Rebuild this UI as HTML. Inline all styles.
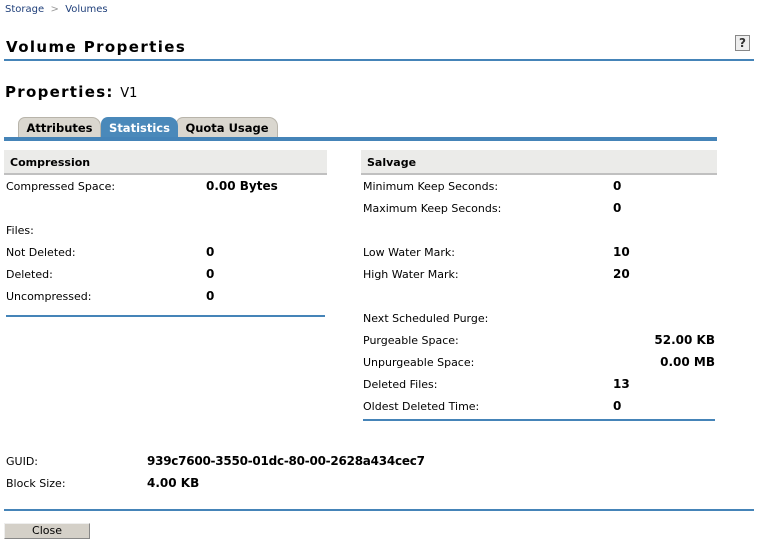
<!DOCTYPE html>
<html><head><style>
body{margin:0;width:758px;height:542px;background:#fff;font-family:"DejaVu Sans","Liberation Sans",sans-serif;font-size:11px;color:#000;position:relative;overflow:hidden}
.a{position:absolute;white-space:nowrap;margin-top:1px}
.b{font-weight:bold;font-size:12px}
.line{position:absolute;background:#4584b8}
.hdr{position:absolute;background:#ebebe9;border-bottom:2px solid #c0c0c0;font-weight:bold;font-size:11px;box-sizing:border-box;padding:6px 0 0 6px;height:25px}
.tab{position:absolute;top:117px;height:20px;background:#dad7cf;border-radius:7px 9px 0 0;font-weight:bold;font-size:11.5px;text-align:center;line-height:21px;border:1px solid #b8b4aa;border-bottom:none;box-sizing:border-box}
</style></head><body>
<div class="a" style="left:5px;top:3px;font-size:10px;color:#1f3f7a">Storage &nbsp;<span style="color:#999">&gt;</span>&nbsp; Volumes</div>
<div class="a" style="left:6px;top:37px;font-size:15px;font-weight:bold;letter-spacing:1.4px">Volume Properties</div>
<div class="a" style="left:735px;top:34px;width:13px;height:14px;border:1px solid #888;background:#eee;font-size:12px;font-weight:bold;text-align:center;line-height:14px;color:#333">?</div>
<div class="line" style="left:4px;top:59px;width:750px;height:2px"></div>
<div class="a" style="left:5px;top:82px;font-size:15px;font-weight:bold;letter-spacing:1.3px">Properties: <span style="font-weight:normal;font-size:13px;letter-spacing:0">V1</span></div>
<div class="tab" style="left:18px;width:83px">Attributes</div>
<div class="tab" style="left:176px;width:102px">Quota Usage</div>
<div class="tab" style="left:101px;width:77px;background:#4a89ba;color:#fff;border-color:#4a89ba">Statistics</div>
<div class="line" style="left:4px;top:137px;width:713px;height:4px"></div>
<div class="hdr" style="left:4px;top:150px;width:323px">Compression</div>
<div class="hdr" style="left:361px;top:150px;width:356px">Salvage</div>

<div class="a" style="left:6px;top:179px">Compressed Space:</div><div class="a b" style="left:206px;top:178px">0.00 Bytes</div>
<div class="a" style="left:6px;top:223px">Files:</div>
<div class="a" style="left:6px;top:245px">Not Deleted:</div><div class="a b" style="left:206px;top:244px">0</div>
<div class="a" style="left:6px;top:267px">Deleted:</div><div class="a b" style="left:206px;top:266px">0</div>
<div class="a" style="left:6px;top:289px">Uncompressed:</div><div class="a b" style="left:206px;top:288px">0</div>
<div class="line" style="left:6px;top:315px;width:319px;height:2px"></div>

<div class="a" style="left:363px;top:179px">Minimum Keep Seconds:</div><div class="a b" style="left:613px;top:178px">0</div>
<div class="a" style="left:363px;top:201px">Maximum Keep Seconds:</div><div class="a b" style="left:613px;top:200px">0</div>
<div class="a" style="left:363px;top:245px">Low Water Mark:</div><div class="a b" style="left:613px;top:244px">10</div>
<div class="a" style="left:363px;top:267px">High Water Mark:</div><div class="a b" style="left:613px;top:266px">20</div>
<div class="a" style="left:363px;top:311px">Next Scheduled Purge:</div>
<div class="a" style="left:363px;top:333px">Purgeable Space:</div><div class="a b" style="right:43px;top:332px">52.00 KB</div>
<div class="a" style="left:363px;top:355px">Unpurgeable Space:</div><div class="a b" style="right:43px;top:354px">0.00 MB</div>
<div class="a" style="left:363px;top:377px">Deleted Files:</div><div class="a b" style="left:613px;top:376px">13</div>
<div class="a" style="left:363px;top:399px">Oldest Deleted Time:</div><div class="a b" style="left:613px;top:398px">0</div>
<div class="line" style="left:363px;top:419px;width:352px;height:2px"></div>

<div class="a" style="left:6px;top:454px">GUID:</div><div class="a b" style="left:147px;top:453px;letter-spacing:-0.25px">939c7600-3550-01dc-80-00-2628a434cec7</div>
<div class="a" style="left:6px;top:476px">Block Size:</div><div class="a b" style="left:147px;top:475px">4.00 KB</div>
<div class="line" style="left:4px;top:509px;width:750px;height:2px"></div>
<div class="a" style="left:4px;top:522px;width:84px;height:14px;background:#d4d0c8;border:1px solid #888;border-top-color:#eee;border-left-color:#eee;text-align:center;line-height:14px">Close</div>
</body></html>
